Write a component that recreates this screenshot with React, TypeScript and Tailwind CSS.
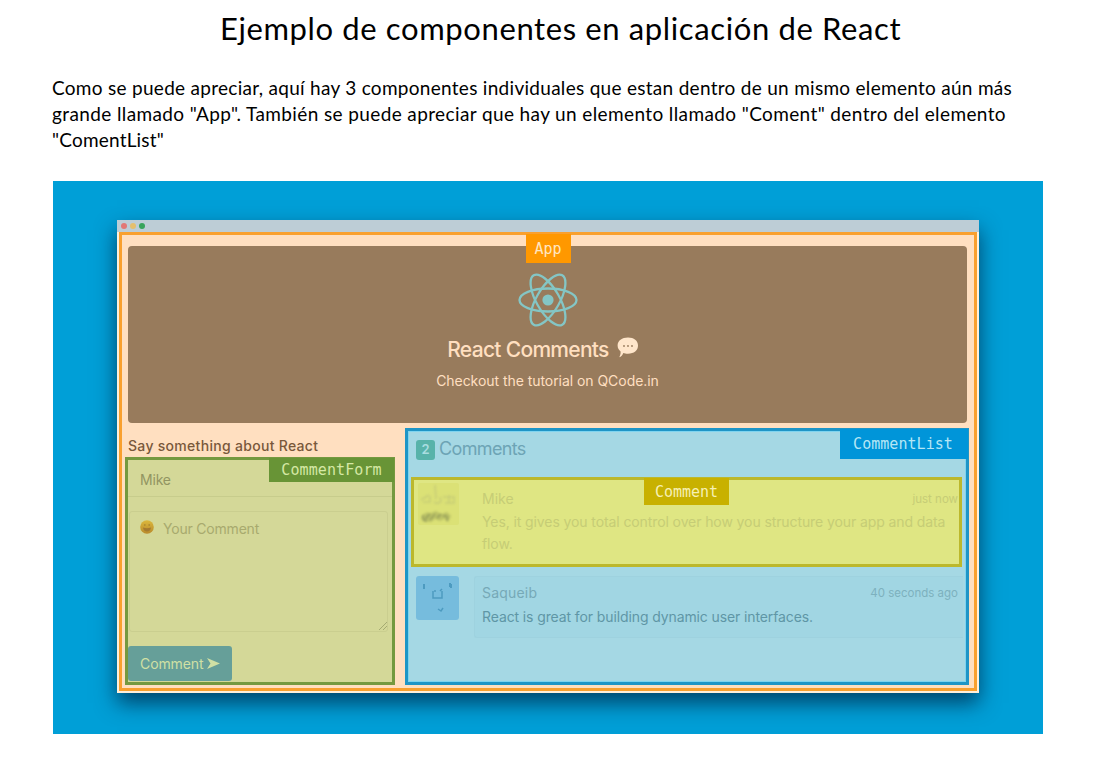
import React from "react";

function ReactLogo() {
  return (
    <svg width="60" height="56" viewBox="-30 -28 60 56" fill="none" stroke="#84c6c5" strokeWidth="2.3">
      <g>
        <ellipse rx="28.5" ry="11.500" />
        <ellipse rx="28.5" ry="11.500" transform="rotate(60)" />
        <ellipse rx="28.5" ry="11.500" transform="rotate(120)" />
      </g>
      <circle r="5.6" fill="#84c6c5" stroke="none" />
    </svg>
  );
}

function SpeechBubble() {
  return (
    <svg width="22" height="22" viewBox="0 0 22 22">
      <path d="M11 0.500C17 0.500 21 3.500 21 8.500S17 16.700 11 16.700C9 16.700 7.500 16.500 6.300 16C5.500 18 4.200 19.800 2.200 20.300C3 19 3.800 17 3.600 14.500C2 13 0.600 11.400 0.600 8.500C0.600 3.500 5 0.500 11 0.500Z" fill="#ffe6cb" />
      <circle cx="7" cy="9" r="0.9" fill="#987b5c" />
      <circle cx="11" cy="9" r="0.9" fill="#987b5c" />
      <circle cx="15" cy="9" r="0.9" fill="#987b5c" />
    </svg>
  );
}

function Smiley() {
  return (
    <svg width="14" height="14" viewBox="0 0 14 14">
      <defs>
        <linearGradient id="face" x1="0" y1="0" x2="0" y2="1">
          <stop offset="0" stopColor="#dcb83c" />
          <stop offset="1" stopColor="#b98a2c" />
        </linearGradient>
      </defs>
      <circle cx="7" cy="7" r="6.800" fill="url(#face)" />
      <path d="M3 7.500Q7 9 11 7.500Q10.500 11.500 7 11.500T3 7.500Z" fill="#a47a30" />
      <circle cx="4.800" cy="5" r="0.900" fill="#b08c30" />
      <circle cx="9.200" cy="5" r="0.900" fill="#b08c30" />
    </svg>
  );
}

function MikeAvatar() {
  return (
    <svg width="44" height="44" viewBox="0 0 44 44" fill="none">
      <rect width="41" height="42" fill="#dbe176" rx="2" />
      <g style={{ filter: "blur(0.8px)" }}>
        <path d="M3 17L11 12M5 19H12V13M17 2L18 16M16 19Q20 22 23 18L22 14M25 14H36V20H27M31 12V20" stroke="#c8ce76" strokeWidth="1.600" />
        <path d="M4 33Q7 28 13 30L18 28L23 31L29 29L33 33L30 39L26 36L22 38L17 36L13 39L7 38Z" fill="#bcc366" />
        <path d="M5 32Q3 38 9 38M7 36L12 31M12 37L17 31M19 35L23 31M25 33Q31 32 29 38" stroke="#9ba35c" strokeWidth="1.800" />
      </g>
    </svg>
  );
}

function SaqueibAvatar() {
  return (
    <svg width="44" height="44" viewBox="0 0 44 44" fill="none">
      <rect width="43" height="44" rx="3" fill="#76bcdd" />
      <g stroke="#4d9bc0" strokeWidth="1.500" style={{ filter: "blur(0.5px)" }}>
        <path d="M8 8V13M34 7V11M35 8V12" strokeWidth="2" />
        <path d="M17 15V22H26V15M18 15H20M24 15L26 13" />
        <path d="M22 33L25 35L27 32" />
      </g>
    </svg>
  );
}

function CommentForm() {
  return (
    <section className="relative h-[228px] w-[270px] border-[3px] border-[#75993f] bg-[#d4d898]">
      <div className="flex h-[37px] items-center border-b border-[#c7cc8c] pl-[12px] text-[14px] text-[#929562]">
        <span className="pt-[2px] tracking-[-0.200px]">Mike</span>
      </div>
      <div className="relative mt-[14px] ml-[1px] mr-[4px] flex h-[121px] items-start rounded-[3px] border border-[#cace8f] pl-[10px] pt-[8px]">
        <Smiley />
        <span className="ml-[9px] text-[14px] leading-[17px] tracking-[-0.200px] text-[#a8aa6e]">Your Comment</span>
        <svg className="absolute bottom-px right-0" width="8" height="8" viewBox="0 0 8 8" stroke="#a5ab72">
          <path d="M0 8L8 0M4 8L8 4" />
        </svg>
      </div>
      <button className="mt-[14px] flex h-[35px] w-[104px] items-center gap-[4px] rounded-[3px] bg-[#669f99] pl-[12px] text-[14px] text-[#d0e0a4]">
        <span className="tracking-[-0.100px]">Comment</span>
        <svg width="13" height="11" viewBox="0 0 13 11" fill="#d0e0a4">
          <path d="M0 0L13 5.500L0 11L3.500 5.500Z" />
        </svg>
      </button>
      <span className="absolute -right-[2px] -top-[2px] flex h-[24px] w-[125px] items-center justify-center bg-[#689436] font-['DejaVu_Sans_Mono',monospace] text-[15px] tracking-[0.100px] text-[#d5e8a4]">
        CommentForm
      </span>
    </section>
  );
}

function CommentList() {
  return (
    <section className="relative h-[257px] w-[564px] border-[3px] border-[#1f95c6] bg-[#a5d8e4] pl-[3px] shadow-[inset_0_0_0_1px_#7fd4ef]">
      <header className="flex h-[46px] items-start gap-[4px] pl-[5px] pt-[9px]">
        <span className="flex h-[20px] w-[19px] items-center justify-center rounded-[3px] bg-[#58b3aa] text-[13px] font-semibold text-[#a9dde0]">2</span>
        <h2 className="text-[18px] leading-[18px] tracking-[-0.650px] text-[#6da4b5]">Comments</h2>
      </header>
      <article className="relative flex h-[90px] w-[551px] border-[3px] border-[#bcb82c] bg-[#dfe683] pl-[4px] pt-[3px]">
        <MikeAvatar />
        <div className="ml-[20px] w-[476px] text-[14px] text-[#c6cd76]">
          <div className="flex items-center justify-between pt-[6px]">
            <span className="leading-[20px]">Mike</span>
            <span className="text-[11.500px] leading-[20px]">just now</span>
          </div>
          <p className="mt-[2px] w-[474px] whitespace-nowrap leading-[22px] tracking-[-0.100px]">
            Yes, it gives you total control over how you structure your app and data<br />flow.
          </p>
        </div>
        <span className="absolute left-[230px] -top-[2px] flex h-[27px] w-[85px] items-center justify-center bg-[#c8b100] pt-[2px] font-['DejaVu_Sans_Mono',monospace] text-[15px] text-[#f6f0b4]">
          Comment
        </span>
      </article>
      <article className="flex pl-[5px] pt-[9px]">
        <SaqueibAvatar />
        <div className="ml-[14px] h-[62px] w-[489px] rounded-l-[3px] border border-r-0 border-[#9ed2df] bg-[#a1d6e3] pl-[7px] pr-[5px] text-[14px]">
          <div className="flex items-center justify-between pt-[6px]">
            <span className="leading-[20px] tracking-[0.200px] text-[#76a9b7]">Saqueib</span>
            <span className="text-[11.500px] leading-[20px] text-[#7db1be]">40 seconds ago</span>
          </div>
          <p className="mt-[3px] whitespace-nowrap leading-[22px] tracking-[-0.110px] text-[#5f96a6]">React is great for building dynamic user interfaces.</p>
        </div>
      </article>
      <span className="absolute -right-[2px] -top-[2px] flex h-[30px] w-[128px] items-center justify-center bg-[#0095d9] pt-px pr-[2px] font-['DejaVu_Sans_Mono',monospace] text-[15px] tracking-[0.050px] text-[#b5e6f5]">
        CommentList
      </span>
    </section>
  );
}

function BrowserWindow() {
  return (
    <div className="flex h-[473px] w-[862px] flex-col bg-[#fff0dc] px-[2px] pb-[2px] font-[Inter,sans-serif] shadow-[0_10px_20px_0_rgba(0,30,60,0.7)]">
      <div className="-mx-[2px] flex h-[12px] shrink-0 items-center gap-[3px] bg-[#bdcdd6] pl-[4px]">
        <i className="h-[6px] w-[6px] rounded-full bg-[#e27775]" />
        <i className="h-[6px] w-[6px] rounded-full bg-[#e5bf6d]" />
        <i className="h-[6px] w-[6px] rounded-full bg-[#38a45c]" />
      </div>
      <main className="relative flex-1 border-[3px] border-[#f9a02e] bg-[#ffdfc0]">
        <header className="ml-[6px] mt-[11px] flex h-[177px] w-[839px] flex-col items-center rounded-[4px] bg-[#987b5c] pt-[26px] text-[#ffdfc0]">
          <ReactLogo />
          <div className="mr-[9px] mt-[10px] flex h-[24px] items-center gap-[8px]">
            <h1 className="whitespace-nowrap text-[21px] font-medium tracking-[-0.700px]">React Comments</h1>
            <div className="-mt-[4px]"><SpeechBubble /></div>
          </div>
          <p className="mt-[9px] whitespace-nowrap text-[14px] leading-[19px] tracking-[-0.050px]">Checkout the tutorial on QCode.in</p>
        </header>
        <div className="flex pl-[3px] pt-[5px]">
          <div className="w-[280px] shrink-0">
            <h3 className="h-[29px] whitespace-nowrap pl-[3px] pt-[9px] text-[14px] font-medium leading-[18px] tracking-[0.300px] text-[#79583b]">Say something about React</h3>
            <CommentForm />
          </div>
          <CommentList />
        </div>
        <span className="absolute left-[404px] -top-px flex h-[29px] w-[45px] items-center justify-center bg-[#ff9800] pt-[2px] pr-px font-['DejaVu_Sans_Mono',monospace] text-[15px] text-[#ffe6c2]">
          App
        </span>
      </main>
    </div>
  );
}

export default function App() {
  return (
    <div className="flex h-[758px] w-[1108px] flex-col overflow-hidden bg-white pl-[53px] font-[Lato,sans-serif] text-black">
      <h1 className="ml-[167px] mt-[8px] h-[40px] whitespace-nowrap text-[31px] leading-[40px] tracking-[0.620px]">Ejemplo de componentes en aplicación de React</h1>
      <p className="-ml-px mt-[27px] h-[106px] whitespace-nowrap text-[19px] leading-[26px]">
        <span className="tracking-[0.290px]">Como se puede apreciar, aquí hay 3 componentes individuales que estan dentro de un mismo elemento aún más</span><br />
        <span className="tracking-[0.385px]">grande llamado "App". También se puede apreciar que hay un elemento llamado "Coment" dentro del elemento</span><br />
        <span className="tracking-[0.200px]">"ComentList"</span>
      </p>
      <div className="h-[553px] w-[990px] shrink-0 overflow-hidden bg-[#009fd7] pl-[64px] pt-[39px]">
        <BrowserWindow />
      </div>
    </div>
  );
}
